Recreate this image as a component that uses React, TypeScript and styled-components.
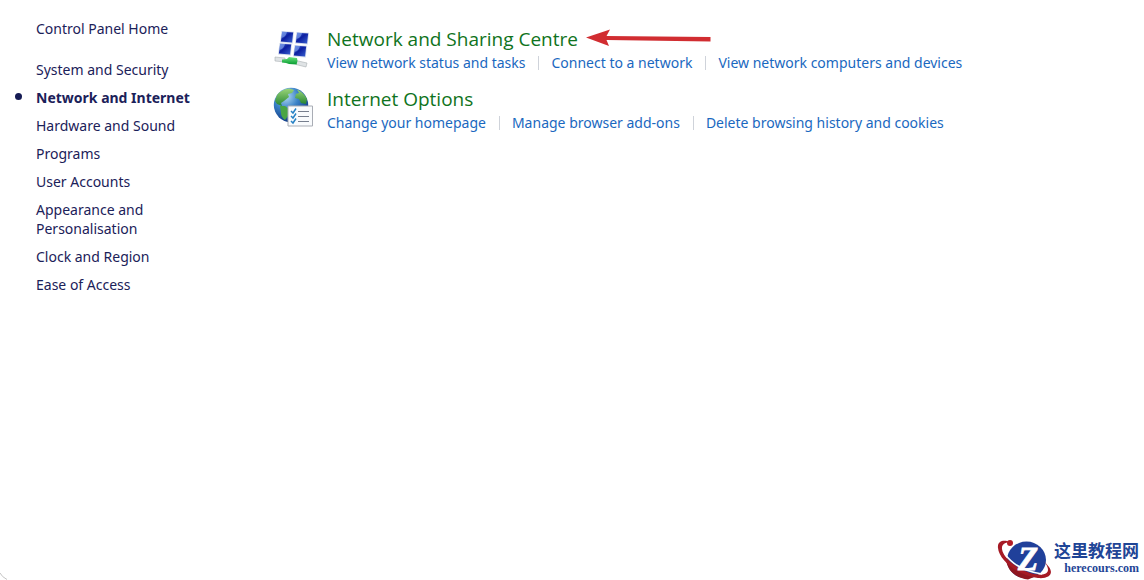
import React from "react";
import styled, { createGlobalStyle } from "styled-components";

const GlobalStyle = createGlobalStyle`
  *, *::before, *::after { box-sizing: border-box; }
  body {
    margin: 0;
    background: #fff;
    font-family: "Noto Sans", "Open Sans", sans-serif;
    font-size: 14px;
    line-height: 20px;
  }
`;

const Page = styled.div`
  position: relative;
  display: flex;
  min-height: 100vh;
  overflow: hidden;
`;

const Sidebar = styled.nav`
  flex: none;
  width: 272px;
  padding: 19px 76px 0 36px;
`;

const HomeLink = styled.a`
  display: block;
  color: #1b2159;
  text-decoration: none;
  line-height: 19px;
  margin-bottom: 22px;
`;

const CategoryList = styled.ul`
  list-style: none;
  margin: 0;
  padding: 0;
  display: flex;
  flex-direction: column;
  gap: 9px;
  line-height: 19px;
`;

const Category = styled.li<{ $current?: boolean }>`
  position: relative;
  font-weight: ${(p) => (p.$current ? 700 : 400)};

  &::before {
    content: "";
    display: ${(p) => (p.$current ? "block" : "none")};
    position: absolute;
    left: -21px;
    top: 5px;
    width: 7px;
    height: 7px;
    border-radius: 50%;
    background: #151b54;
  }
`;

const CategoryLink = styled.a`
  color: #1b2159;
  text-decoration: none;
`;

const Main = styled.main`
  flex: 1;
  min-width: 0;
  padding-top: 26px;
  display: flex;
  flex-direction: column;
  gap: 14px;
`;

const Group = styled.section`
  display: flex;
  gap: 13px;
`;

const IconSlot = styled.div`
  flex: none;
  width: 42px;
  height: 42px;

  svg { display: block; }
`;

const TitleRow = styled.div`
  display: flex;
  align-items: flex-start;
  gap: 8px;
  height: 27px;
`;

const Title = styled.h2`
  margin: 0;
  font-family: "Open Sans", "Noto Sans", sans-serif;
  font-size: 19px;
  font-weight: 400;
  line-height: 27px;
  white-space: nowrap;
`;

const TitleLink = styled.a`
  color: #0f7320;
  text-decoration: none;
`;

const TaskList = styled.ul`
  list-style: none;
  margin: 0;
  padding: 0;
  display: flex;
  line-height: 19px;
`;

const Task = styled.li`
  display: flex;
  align-items: center;
  white-space: nowrap;

  & + &::before {
    content: "";
    width: 1px;
    height: 14px;
    margin: 0 12px 0 13px;
    background: #cfd3da;
  }
`;

const TaskLink = styled.a`
  color: #1a68c0;
  text-decoration: none;
`;

const Watermark = styled.div`
  position: absolute;
  right: 5px;
  bottom: 0;
  display: flex;
  align-items: center;
  color: #1f4596;
`;

const WatermarkText = styled.div`
  display: flex;
  flex-direction: column;
  align-items: flex-end;
`;

const SiteName = styled.span`
  font: 700 17px/20px "Noto Sans CJK SC", sans-serif;
`;

const SiteDomain = styled.span`
  font: 700 12px/16px "Liberation Serif", serif;
`;

const WindowCorner = styled.svg`
  position: absolute;
  left: 0;
  bottom: 0;
`;

const Monitor = ({ x, y }: { x: number; y: number }) => (
  <g transform={`translate(${x} ${y})`}>
    <path d="M1.500 0 14 .8 12.800 12.500 0 11.500Z" fill="#d3dced" />
    <path d="M2.200 .8 13.200 1.500 12 11.500 .9 10.600Z" fill="url(#screen)" />
    <path d="M2.200 .8 7 1.100Q6 6 1.400 7Z" fill="#8fb0f2" opacity=".6" />
  </g>
);

const NetworkIcon = () => (
  <svg width="42" height="42" viewBox="0 0 42 42" aria-hidden="true">
    <defs>
      <linearGradient id="screen" x1="0" y1="0" x2="1" y2="1">
        <stop offset="0" stopColor="#3c68dd" />
        <stop offset=".45" stopColor="#0c1fa0" />
        <stop offset="1" stopColor="#3a62d2" />
      </linearGradient>
      <linearGradient id="plug" x1="0" y1="0" x2="0" y2="1">
        <stop offset="0" stopColor="#6be27d" />
        <stop offset="1" stopColor="#079b31" />
      </linearGradient>
    </defs>
    <Monitor x={8} y={5} />
    <Monitor x={23} y={6} />
    <Monitor x={6} y={17} />
    <Monitor x={21} y={19} />
    <path d="M3 31 13 32 13 36 3 35Z" fill="#dfe3e5" stroke="#a9b0b4" strokeWidth=".6" />
    <path d="M24 34.500 35 37 34 41 24 38.500Z" fill="#dfe3e5" stroke="#a9b0b4" strokeWidth=".6" />
    <path d="M10 33.500 15 33 17 31 25 32 25.500 35 24.500 38.500 17 38 14 37 10 36.500Z" fill="url(#plug)" />
  </svg>
);

const InternetIcon = () => (
  <svg width="42" height="42" viewBox="0 0 42 42" aria-hidden="true">
    <defs>
      <radialGradient id="ocean" cx=".35" cy=".25" r=".8">
        <stop offset="0" stopColor="#b5dcf3" />
        <stop offset=".45" stopColor="#3b83c8" />
        <stop offset="1" stopColor="#0a327e" />
      </radialGradient>
      <linearGradient id="land" x1="0" y1="0" x2="0" y2="1">
        <stop offset="0" stopColor="#9ad579" />
        <stop offset="1" stopColor="#258532" />
      </linearGradient>
    </defs>
    <circle cx="19" cy="19" r="17.200" fill="url(#ocean)" />
    <path d="M5 9Q9 3.500 17 2.500L22 4 20 7 16 8 17 11 12 15 9 17 10 20 5 18 3 15Z" fill="url(#land)" />
    <path d="M25 3.500Q32 6.500 35 13L34 18 29 17 27 13 23 12 24 8 27 7Z" fill="url(#land)" />
    <path d="M8 20 13 20 18 24 16 30 13 34Q9 31 9 27Z" fill="#49a545" />
    <path d="M16 20H40.500V40H16Z" fill="#f9fbfd" stroke="#a9adb5" />
    <path d="M26 25.500H37M26 30.500H37M26 35.500H37" stroke="#777f8e" />
    <path d="M19 25 21 27 24 22.500M19 30 21 32 24 27.500M19 35 21 37 24 32.500" fill="none" stroke="#2581c5" strokeWidth="1.500" />
  </svg>
);

const Arrow = () => (
  <svg width="125" height="24" viewBox="0 0 125 24" aria-hidden="true">
    <path d="M0 11.500 24 3.500 20.500 10 124.500 11V15.500L20.500 14 23 20Z" fill="#d12d31" />
  </svg>
);

const Logo = () => (
  <svg width="58" height="44" viewBox="0 0 58 44" aria-hidden="true">
    <ellipse cx="30.500" cy="24" rx="19.500" ry="18.500" fill="#20409a" />
    <path d="M10 23C11 35 20 42 32 43.500L38 41 24 34Z" fill="#8f1620" />
    <path d="M15 6.500C8 3 1 5 2 12 3 24 22 40 42 42 53 43 58 38 53 31L48 25C54 33 54 39 43 38.500 27 38 7 23 6 13 5.500 8 9 6 15 6.500Z" fill="#a51a25" />
    <circle cx="14" cy="7" r="3" fill="#b31d26" />
    <path d="M9 18Q20 34 46 38" fill="none" stroke="#fff" strokeWidth="1.500" />
    <text x="32" y="34" textAnchor="middle" fontFamily="Liberation Serif, serif" fontSize="33" fontWeight="700" fontStyle="italic" fill="#fff" stroke="#fff" strokeWidth=".8">Z</text>
  </svg>
);

const categories = [
  "System and Security",
  "Network and Internet",
  "Hardware and Sound",
  "Programs",
  "User Accounts",
  "Appearance and Personalisation",
  "Clock and Region",
  "Ease of Access",
];

const groups = [
  {
    title: "Network and Sharing Centre",
    icon: <NetworkIcon />,
    highlighted: true,
    tasks: [
      "View network status and tasks",
      "Connect to a network",
      "View network computers and devices",
    ],
  },
  {
    title: "Internet Options",
    icon: <InternetIcon />,
    highlighted: false,
    tasks: [
      "Change your homepage",
      "Manage browser add-ons",
      "Delete browsing history and cookies",
    ],
  },
];

export default function App() {
  return (
    <>
      <GlobalStyle />
      <Page>
        <Sidebar>
          <HomeLink href="#">Control Panel Home</HomeLink>
          <CategoryList>
            {categories.map((name) => (
              <Category key={name} $current={name === "Network and Internet"}>
                <CategoryLink href="#">{name}</CategoryLink>
              </Category>
            ))}
          </CategoryList>
        </Sidebar>
        <Main>
          {groups.map((group) => (
            <Group key={group.title}>
              <IconSlot>{group.icon}</IconSlot>
              <div>
                <TitleRow>
                  <Title>
                    <TitleLink href="#">{group.title}</TitleLink>
                  </Title>
                  {group.highlighted && <Arrow />}
                </TitleRow>
                <TaskList>
                  {group.tasks.map((task) => (
                    <Task key={task}>
                      <TaskLink href="#">{task}</TaskLink>
                    </Task>
                  ))}
                </TaskList>
              </div>
            </Group>
          ))}
        </Main>
        <WindowCorner width="8" height="8" viewBox="0 0 8 8" aria-hidden="true">
          <path d="M0 1Q2 5 7 7.500" fill="none" stroke="#c4c4c4" />
        </WindowCorner>
        <Watermark>
          <Logo />
          <WatermarkText>
            <SiteName lang="zh">这里教程网</SiteName>
            <SiteDomain>herecours.com</SiteDomain>
          </WatermarkText>
        </Watermark>
      </Page>
    </>
  );
}
